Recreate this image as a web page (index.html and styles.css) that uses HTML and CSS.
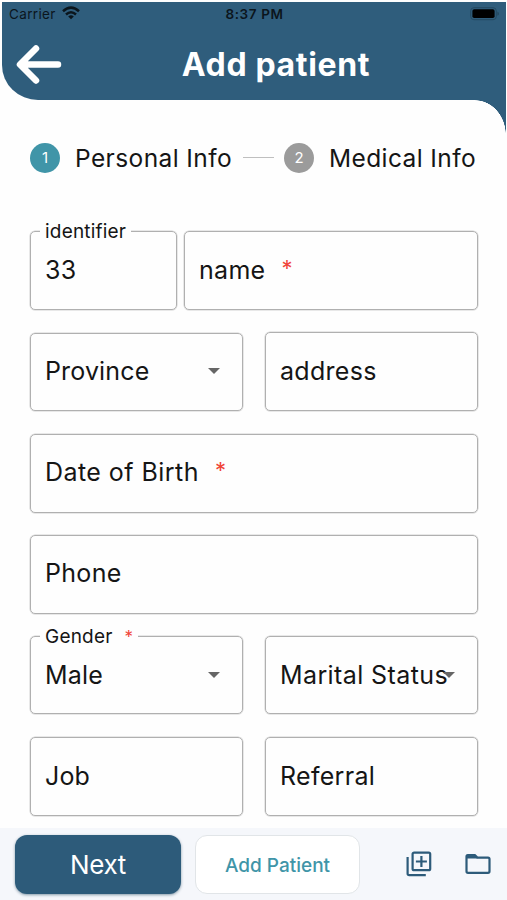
FILE: index.html
```html
<!DOCTYPE html>
<html lang="en">
<head>
<meta charset="utf-8">
<title>Add patient</title>
<link rel="stylesheet" href="styles.css">
</head>
<body>
<div class="app">
  <header class="header">
    <div class="status">
      <div class="carrier"><span>Carrier</span>
        <svg class="wifi" viewBox="0 0 18 14" width="18" height="14"><g fill="none" stroke="#0b151c" stroke-width="2.5"><path d="M1 5.2Q9-2 17 5.2"/><path d="M4 8.500Q9 4 14 8.500"/></g><path d="M6.200 10.400Q9 8 11.800 10.400L9 13.300Z" fill="#0b151c"/></svg>
      </div>
      <div class="time">8:37 PM</div>
      <svg class="battery" viewBox="0 0 30 14" width="30" height="14"><rect x=".7" y=".7" width="25.600" height="12" rx="3.200" fill="none" stroke="#244960" stroke-width="1"/><rect x="2.400" y="2.300" width="22.200" height="8.800" rx="1.800" fill="#000"/><path d="M27.400 4.600Q29 5.400 29 6.700T27.400 8.800Z" fill="#244960"/></svg>
    </div>
    <div class="titlebar">
      <svg class="back" viewBox="0 0 50 40" width="50" height="40"><path d="M22 4.500 6 20.500 22 36.500M7 20.500H44" fill="none" stroke="#fff" stroke-width="6.500" stroke-linecap="round" stroke-linejoin="round"/></svg>
      <h1>Add patient</h1>
    </div>
  </header>

  <main class="content">
    <div class="stepper">
      <span class="dot active">1</span><span class="step s1">Personal Info</span>
      <span class="line"></span>
      <span class="dot">2</span><span class="step s2">Medical Info</span>
    </div>
    <form class="form">
      <div class="row first">
        <div class="field"><span class="label">identifier</span><span class="text">33</span></div>
        <div class="field"><span class="text">name</span><span class="star">*</span></div>
      </div>
      <div class="row">
        <div class="field short low"><span class="text tight">Province</span><i class="caret"></i></div>
        <div class="field"><span class="text">address</span></div>
      </div>
      <div class="row single">
        <div class="field"><span class="text dob">Date of Birth</span><span class="star">*</span></div>
      </div>
      <div class="row single">
        <div class="field"><span class="text">Phone</span></div>
      </div>
      <div class="row">
        <div class="field short"><span class="label">Gender<span class="mini">*</span></span><span class="text tight">Male</span><i class="caret"></i></div>
        <div class="field short"><span class="text marital">Marital Status</span><i class="caret"></i></div>
      </div>
      <div class="row">
        <div class="field"><span class="text tight">Job</span></div>
        <div class="field"><span class="text">Referral</span></div>
      </div>
    </form>
  </main>

  <footer class="footer">
    <button class="btn next">Next</button>
    <button class="btn add">Add Patient</button>
    <svg class="copy" viewBox="0 0 26 26" width="26" height="26"><g fill="none" stroke="#2d5b7a" stroke-width="2.200"><rect x="6.600" y="1.600" width="17.600" height="17.600" rx="1.500"/><path d="M1.600 6V22.600Q1.600 24.200 3.200 24.200H19.800M15.400 5V16M9.900 10.500H20.900"/></g></svg>
    <svg class="folder" viewBox="0 0 26 22" width="26" height="22"><path d="M2.800 2H9.800L12.400 4.600H23Q24.500 4.600 24.500 6.100V18.300Q24.500 19.800 23 19.800H3Q1.500 19.800 1.500 18.300V3.500Q1.500 2 2.800 2Z" fill="none" stroke="#2d5b7a" stroke-width="2.200"/><path d="M1.500 2H9.800L12.400 5.600H1.500Z" fill="#2d5b7a"/></svg>
  </footer>
</div>
</body>
</html>
```
FILE: styles.css
```css
* { box-sizing: border-box; }
body { margin: 0; background: #fefefe; font-family: Inter, "Liberation Sans", sans-serif; color: #151515; }
.app { width: 507px; height: 900px; display: flex; flex-direction: column; overflow: hidden; padding-top: 2px; }
.header { position: relative; height: 98px; margin: 0 1px 0 2px; background: #2f5d7c; border-bottom-left-radius: 36px 35px; flex: none; }
.header::after { content: ""; position: absolute; right: 0; top: 98px; width: 31px; height: 35px; background: radial-gradient(ellipse 31px 35px at 0 100%, transparent 98.500%, #2f5d7c 100%); }
.status { display: grid; grid-template-columns: 1fr auto 1fr; align-items: center; height: 24px; padding: 0 6px 0 7px; color: #0b151c; }
.carrier { display: flex; align-items: center; gap: 6px; font-size: 13.500px; letter-spacing: .35px; }
.wifi { margin-top: -2px; }
.time { font-size: 13.500px; font-weight: 600; letter-spacing: .6px; }
.battery { justify-self: end; }
.titlebar { position: relative; display: flex; align-items: center; justify-content: center; height: 76px; padding-left: 44px; }
.back { position: absolute; left: 12px; top: 18px; }
h1 { margin: 2px 0 0; color: #fff; font-size: 32px; font-weight: 700; line-height: 40px; letter-spacing: .65px; }
.content { flex: 1; min-height: 0; padding: 40px 29px 0 30px; }
.stepper { display: flex; align-items: center; height: 35px; white-space: nowrap; }
.dot { width: 30px; height: 30px; border-radius: 50%; background: #9b9b9b; color: #fff; display: grid; place-items: center; font-size: 15px; flex: none; }
.dot.active { background: #4095a8; }
.step { font-size: 24.500px; letter-spacing: .4px; margin-left: 15px; width: 168px; }
.line { width: 31px; height: 1px; background: #bfbfbf; margin-right: 10px; flex: none; }
.s2 { width: auto; }
.form { display: grid; gap: 22.300px; margin-top: 56px; }
.row { display: grid; grid-template-columns: 1fr 1fr; gap: 22px; height: 79px; }
.row.first { grid-template-columns: 147px 1fr; gap: 7px; }
.row.single { grid-template-columns: 1fr; }
.field { position: relative; display: flex; align-items: center; padding: 0 14px; border: 1px solid #b0b0b0; box-shadow: 0 0 0 .5px #d2d2d2; border-radius: 5px; min-width: 0; }
.field.short { height: 78px; }
.field.low { align-self: end; }
.text { font-size: 25px; line-height: 30px; letter-spacing: .3px; white-space: nowrap; margin-top: -2px; }
.short .text { margin-top: -1px; }
.low .text { margin-top: -3px; }
.tight { letter-spacing: .15px; }
.dob { letter-spacing: .45px; }
.marital { letter-spacing: .4px; }
.star { color: #f04438; font-size: 22px; line-height: 26px; margin-left: 16px; margin-top: -6px; }
.caret { position: absolute; right: 22px; top: 35px; border: 6px solid transparent; border-top-color: #666; border-bottom: 0; }
.low .caret { top: 34px; }
.label { position: absolute; left: 9px; top: -12px; padding: 0 5px; background: #fefefe; font-size: 19px; line-height: 24px; letter-spacing: .2px; white-space: nowrap; }
.mini { color: #f04438; margin-left: 12px; font-size: 17px; }
.footer { display: flex; align-items: center; height: 72px; padding: 0 16px 0 15px; background: #f5f7fb; flex: none; }
.btn { height: 59px; border-radius: 12px; font-family: inherit; padding: 0; }
.next { width: 166px; border: 0; background: #2d5b7a; color: #fff; font-size: 26px; letter-spacing: -.3px; box-shadow: 0 1px 3px #8499a8; }
.add { width: 165px; margin-left: 14px; border: 1px solid #e1e5e8; background: #fff; color: #4095a8; font-size: 19px; font-weight: 500; letter-spacing: 0; padding-top: 2px; }
.copy { margin-left: 46px; }
.folder { margin-left: auto; }
```
